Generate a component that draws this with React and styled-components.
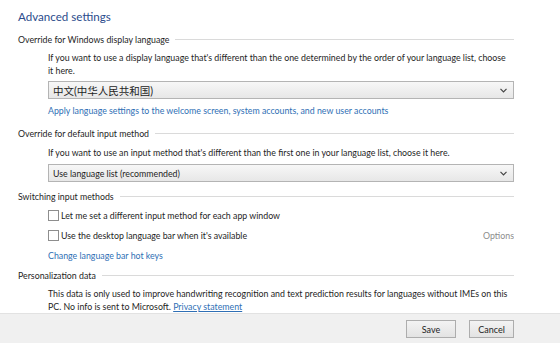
import React from "react";
import styled, { createGlobalStyle } from "styled-components";

const GlobalStyle = createGlobalStyle`
  html, body {
    margin: 0;
    padding: 0;
    background: #ffffff;
  }
  body {
    font-family: Lato, "Noto Sans CJK SC", sans-serif;
    font-size: 8.8px;
    color: #1e1e1e;
  }
`;

const Page = styled.div`
  display: flex;
  flex-direction: column;
  height: 100vh;
  overflow: hidden;
`;

const Content = styled.div`
  flex: 1;
  overflow: hidden;
  padding: 8px 0 0 18px;
  width: 496px;
`;

const Title = styled.h1`
  margin: 0;
  font-size: 11.6px;
  line-height: 18px;
  font-weight: normal;
  color: #2b4c8c;
`;

const SectionHead = styled.div`
  display: flex;
  align-items: center;
  gap: 6px;
  height: 13px;
  margin-top: ${(p) => p.$top}px;
  line-height: 13px;
  white-space: nowrap;

  &::after {
    content: "";
    flex: 1;
    height: 1px;
    background: #dadada;
  }
`;

const Indent = styled.div`
  padding-left: 30px;
`;

const Para = styled.p`
  margin: ${(p) => p.$top}px 0 0;
  line-height: 13px;
  white-space: nowrap;
`;

const Select = styled.div`
  display: flex;
  align-items: center;
  justify-content: space-between;
  box-sizing: border-box;
  height: 18px;
  margin-top: ${(p) => p.$top}px;
  padding: 0 6px 0 4px;
  border: 1px solid #b4b4b4;
  background: linear-gradient(#f7f7f7, #e7e7e7);
  color: #1e1e1e;
`;

const Cjk = styled.span`
  font-size: 10.5px;
`;

const Link = styled.a`
  display: block;
  margin-top: ${(p) => p.$top}px;
  line-height: 13px;
  color: #2f6fb5;
  text-decoration: none;
  cursor: pointer;
`;

const InlineLink = styled.a`
  color: #2f6fb5;
  text-decoration: underline;
  cursor: pointer;
`;

const CheckRow = styled.label`
  display: flex;
  align-items: center;
  height: 13px;
  margin-top: ${(p) => p.$top}px;
  line-height: 13px;
`;

const Box = styled.span`
  box-sizing: border-box;
  width: 11px;
  height: 11px;
  margin-right: 2px;
  border: 1px solid #8e8e8e;
  background: #ffffff;
`;

const Options = styled.span`
  margin-left: auto;
  color: #8c8c8c;
`;

const Footer = styled.div`
  display: flex;
  justify-content: flex-end;
  align-items: flex-start;
  gap: 13px;
  box-sizing: border-box;
  height: 30px;
  padding: 6px 46px 0 0;
  border-top: 1px solid #e2e2e2;
  background: #f0f0f0;
`;

const Button = styled.button`
  box-sizing: border-box;
  width: ${(p) => p.$w}px;
  height: 18px;
  padding: 0;
  border: 1px solid #adadad;
  background: linear-gradient(#f3f3f3, #e3e3e3);
  font-family: inherit;
  font-size: 9px;
  color: #1e1e1e;
`;

const Chevron = () => (
  <svg width="7" height="5" viewBox="0 0 7 5">
    <path d="M0.5 0.8 L3.5 3.8 L6.5 0.8" fill="none" stroke="#444" strokeWidth="1.2" />
  </svg>
);

export default function App() {
  return (
    <Page>
      <GlobalStyle />
      <Content>
        <Title>Advanced settings</Title>

        <SectionHead $top={7}>Override for Windows display language</SectionHead>
        <Indent>
          <Para $top={5}>
            If you want to use a display language that's different than the one determined by the
            order of your language list, choose
            <br />
            it here.
          </Para>
          <Select $top={4}>
            <Cjk>中文(中华人民共和国)</Cjk>
            <Chevron />
          </Select>
          <Link $top={5}>
            Apply language settings to the welcome screen, system accounts, and new user accounts
          </Link>
        </Indent>

        <SectionHead $top={10}>Override for default input method</SectionHead>
        <Indent>
          <Para $top={6}>
            If you want to use an input method that's different than the first one in your language
            list, choose it here.
          </Para>
          <Select $top={5}>
            <span>Use language list (recommended)</span>
            <Chevron />
          </Select>
        </Indent>

        <SectionHead $top={8}>Switching input methods</SectionHead>
        <Indent>
          <CheckRow $top={6}>
            <Box />
            Let me set a different input method for each app window
          </CheckRow>
          <CheckRow $top={7}>
            <Box />
            Use the desktop language bar when it's available
            <Options>Options</Options>
          </CheckRow>
          <Link $top={7}>Change language bar hot keys</Link>
        </Indent>

        <SectionHead $top={7}>Personalization data</SectionHead>
        <Indent>
          <Para $top={5}>
            This data is only used to improve handwriting recognition and text prediction results for
            languages without IMEs on this
            <br />
            PC. No info is sent to Microsoft. <InlineLink>Privacy statement</InlineLink>
          </Para>
        </Indent>
      </Content>
      <Footer>
        <Button $w={50}>Save</Button>
        <Button $w={45}>Cancel</Button>
      </Footer>
    </Page>
  );
}
